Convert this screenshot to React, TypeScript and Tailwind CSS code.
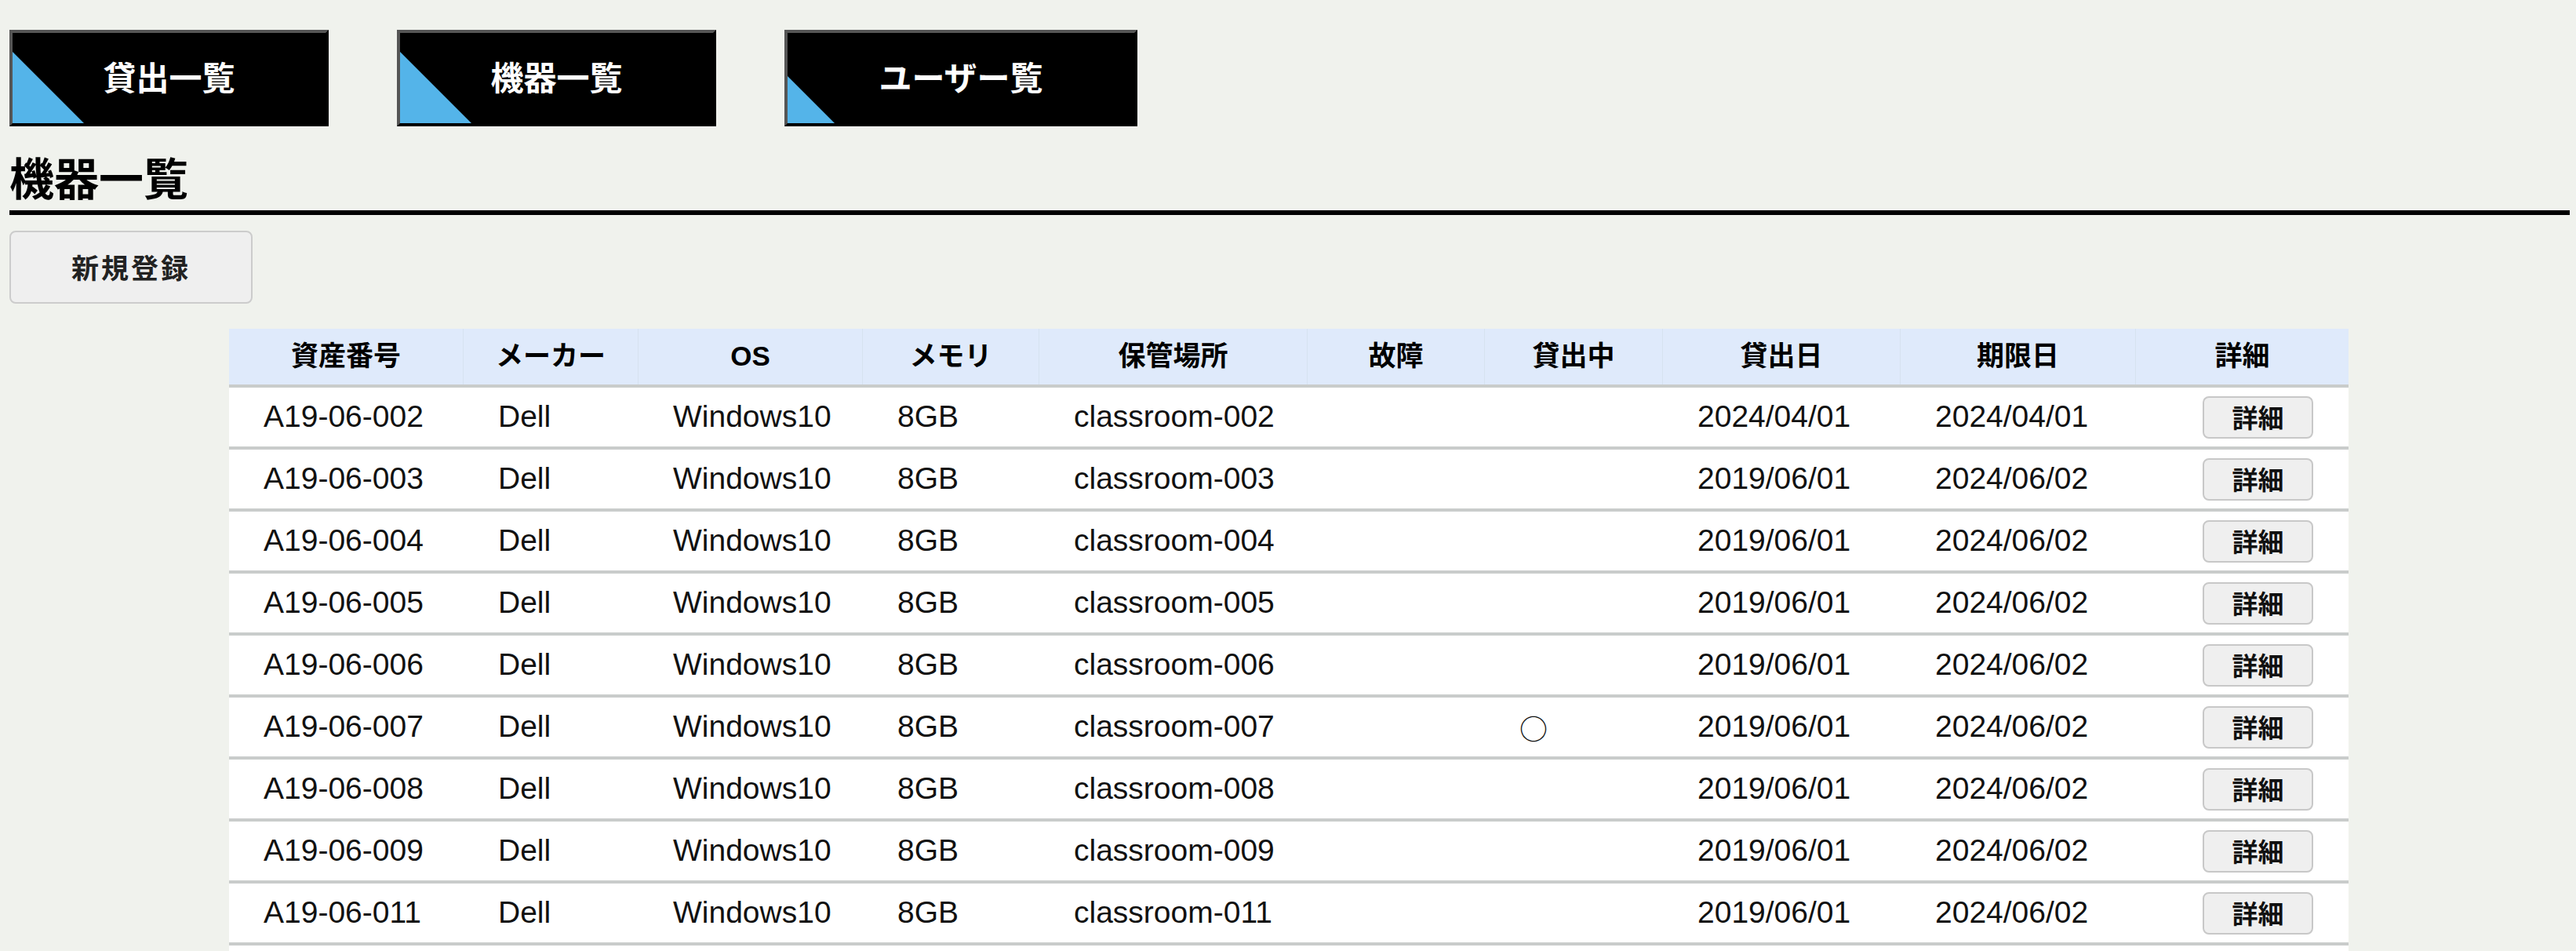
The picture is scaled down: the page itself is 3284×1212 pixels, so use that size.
import React from "react";

const cols = [
  "w-[299px]",
  "w-[223px]",
  "w-[286px]",
  "w-[225px]",
  "w-[342px]",
  "w-[226px]",
  "w-[227px]",
  "w-[303px]",
  "w-[300px]",
  "w-[271px]",
];

const headers = ["資産番号", "メーカー", "OS", "メモリ", "保管場所", "故障", "貸出中", "貸出日", "期限日", "詳細"];

type Row = {
  id: string;
  place: string;
  broken: string;
  lent: boolean;
  start: string;
  end: string;
};

const rows: Row[] = [
  { id: "A19-06-002", place: "classroom-002", broken: "", lent: false, start: "2024/04/01", end: "2024/04/01" },
  { id: "A19-06-003", place: "classroom-003", broken: "", lent: false, start: "2019/06/01", end: "2024/06/02" },
  { id: "A19-06-004", place: "classroom-004", broken: "", lent: false, start: "2019/06/01", end: "2024/06/02" },
  { id: "A19-06-005", place: "classroom-005", broken: "", lent: false, start: "2019/06/01", end: "2024/06/02" },
  { id: "A19-06-006", place: "classroom-006", broken: "", lent: false, start: "2019/06/01", end: "2024/06/02" },
  { id: "A19-06-007", place: "classroom-007", broken: "", lent: true, start: "2019/06/01", end: "2024/06/02" },
  { id: "A19-06-008", place: "classroom-008", broken: "", lent: false, start: "2019/06/01", end: "2024/06/02" },
  { id: "A19-06-009", place: "classroom-009", broken: "", lent: false, start: "2019/06/01", end: "2024/06/02" },
  { id: "A19-06-011", place: "classroom-011", broken: "", lent: false, start: "2019/06/01", end: "2024/06/02" },
];

function NavButton({ label, width, tri }: { label: string; width: string; tri: string }) {
  return (
    <button
      className={`relative h-[123px] ${width} shrink-0 overflow-hidden border-4 border-t-[#555555] border-l-[#555555] border-b-black border-r-black bg-black flex items-center justify-center pb-[6px]`}
    >
      <div className={`absolute left-0 bottom-0 ${tri} bg-[#54b4e9] [clip-path:polygon(0_0,0_100%,100%_100%)]`} />
      <span className="relative text-white font-bold text-[42px] leading-none font-['Noto_Sans_CJK_JP',sans-serif]">
        {label}
      </span>
    </button>
  );
}

function Cell({ i, children }: { i: number; children?: React.ReactNode }) {
  return <div className={`${cols[i]} shrink-0 h-full flex items-center pl-[44px]`}>{children}</div>;
}

export default function App() {
  return (
    <div className="min-h-screen bg-[#f0f2ed] pt-[38px] pl-[12px] pr-[8px] text-[#111111] font-['Liberation_Sans','Noto_Sans_CJK_JP',sans-serif]">
      <nav className="flex gap-[87px]">
        <NavButton label="貸出一覧" width="w-[407px]" tri="w-[91px] h-[91px]" />
        <NavButton label="機器一覧" width="w-[407px]" tri="w-[91px] h-[91px]" />
        <NavButton label="ユーザー覧" width="w-[450px]" tri="w-[60px] h-[60px]" />
      </nav>

      <h1 className="mt-[35px] text-[57px] leading-none font-bold text-black font-['Noto_Sans_CJK_JP',sans-serif]">
        機器一覧
      </h1>
      <div className="mt-[15px] h-[6px] bg-black" />

      <button className="mt-[20px] w-[310px] h-[93px] rounded-[8px] border-2 border-[#cccccc] bg-[#efefef] flex items-center justify-center text-[35px] tracking-[3px] font-bold text-[#222222] font-['Noto_Sans_CJK_JP',sans-serif]">
        新規登録
      </button>

      <div className="mt-[32px] ml-[280px] w-[2702px]">
        <div className="flex h-[75px] bg-[#dfeafb] border-b-4 border-[#c9cccb]">
          {headers.map((h, i) => (
            <div
              key={h}
              className={`${cols[i]} shrink-0 h-full flex items-center justify-center text-[35px] font-bold text-black ${
                i < headers.length - 1 ? "border-r border-[#d6e2f0]" : ""
              }`}
            >
              {h}
            </div>
          ))}
        </div>
        {rows.map((r) => (
          <div key={r.id} className="flex h-[79px] bg-white border-b-4 border-[#c9cccb] text-[39px]">
            <Cell i={0}>{r.id}</Cell>
            <Cell i={1}>Dell</Cell>
            <Cell i={2}>Windows10</Cell>
            <Cell i={3}>8GB</Cell>
            <Cell i={4}>{r.place}</Cell>
            <Cell i={5}>{r.broken}</Cell>
            <Cell i={6}>
              {r.lent ? <span className="font-['Noto_Sans_CJK_JP',sans-serif] text-[36px]">○</span> : null}
            </Cell>
            <Cell i={7}>{r.start}</Cell>
            <Cell i={8}>{r.end}</Cell>
            <div className={`${cols[9]} shrink-0 h-full flex items-center pl-[85px]`}>
              <button className="w-[141px] h-[54px] rounded-[8px] border-2 border-[#c8c8c8] bg-[#efefef] flex items-center justify-center text-[33px] font-bold text-[#111111] font-['Noto_Sans_CJK_JP',sans-serif]">
                詳細
              </button>
            </div>
          </div>
        ))}
        <div className="h-[79px] bg-white" />
      </div>
    </div>
  );
}
